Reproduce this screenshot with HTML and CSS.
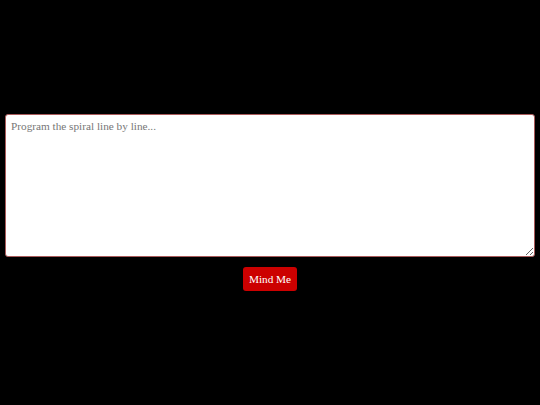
FILE: index.html
```html
<!DOCTYPE html>
<html>
<head>
<meta charset="utf-8">
<link rel="stylesheet" href="styles.css">
</head>
<body>
<main class="wrap">
  <textarea class="code" placeholder="Program the spiral line by line..."></textarea>
  <button class="btn">Mind Me</button>
</main>
</body>
</html>
```

FILE: styles.css
```css
html, body {
  margin: 0;
  height: 100%;
  background: #000;
}
.wrap {
  height: 100%;
  box-sizing: border-box;
  padding: 0 5px;
  display: flex;
  flex-direction: column;
  align-items: center;
  justify-content: center;
  gap: 10px;
}
.code {
  display: block;
  width: 100%;
  height: 143px;
  box-sizing: border-box;
  margin: 0;
  padding: 4px 5px;
  border: 1px solid #a85a5a;
  border-radius: 3px;
  background: #fff;
  font-family: "Liberation Serif", serif;
  font-size: 11.25px;
  line-height: 14px;
  color: #222;
  resize: vertical;
}
.code::placeholder {
  color: #777;
}
.btn {
  height: 24px;
  margin: 0;
  padding: 0 6px;
  border: none;
  border-radius: 3px;
  background: #cc0000;
  color: #fff;
  font-family: "Liberation Serif", serif;
  font-size: 11.25px;
}
```
